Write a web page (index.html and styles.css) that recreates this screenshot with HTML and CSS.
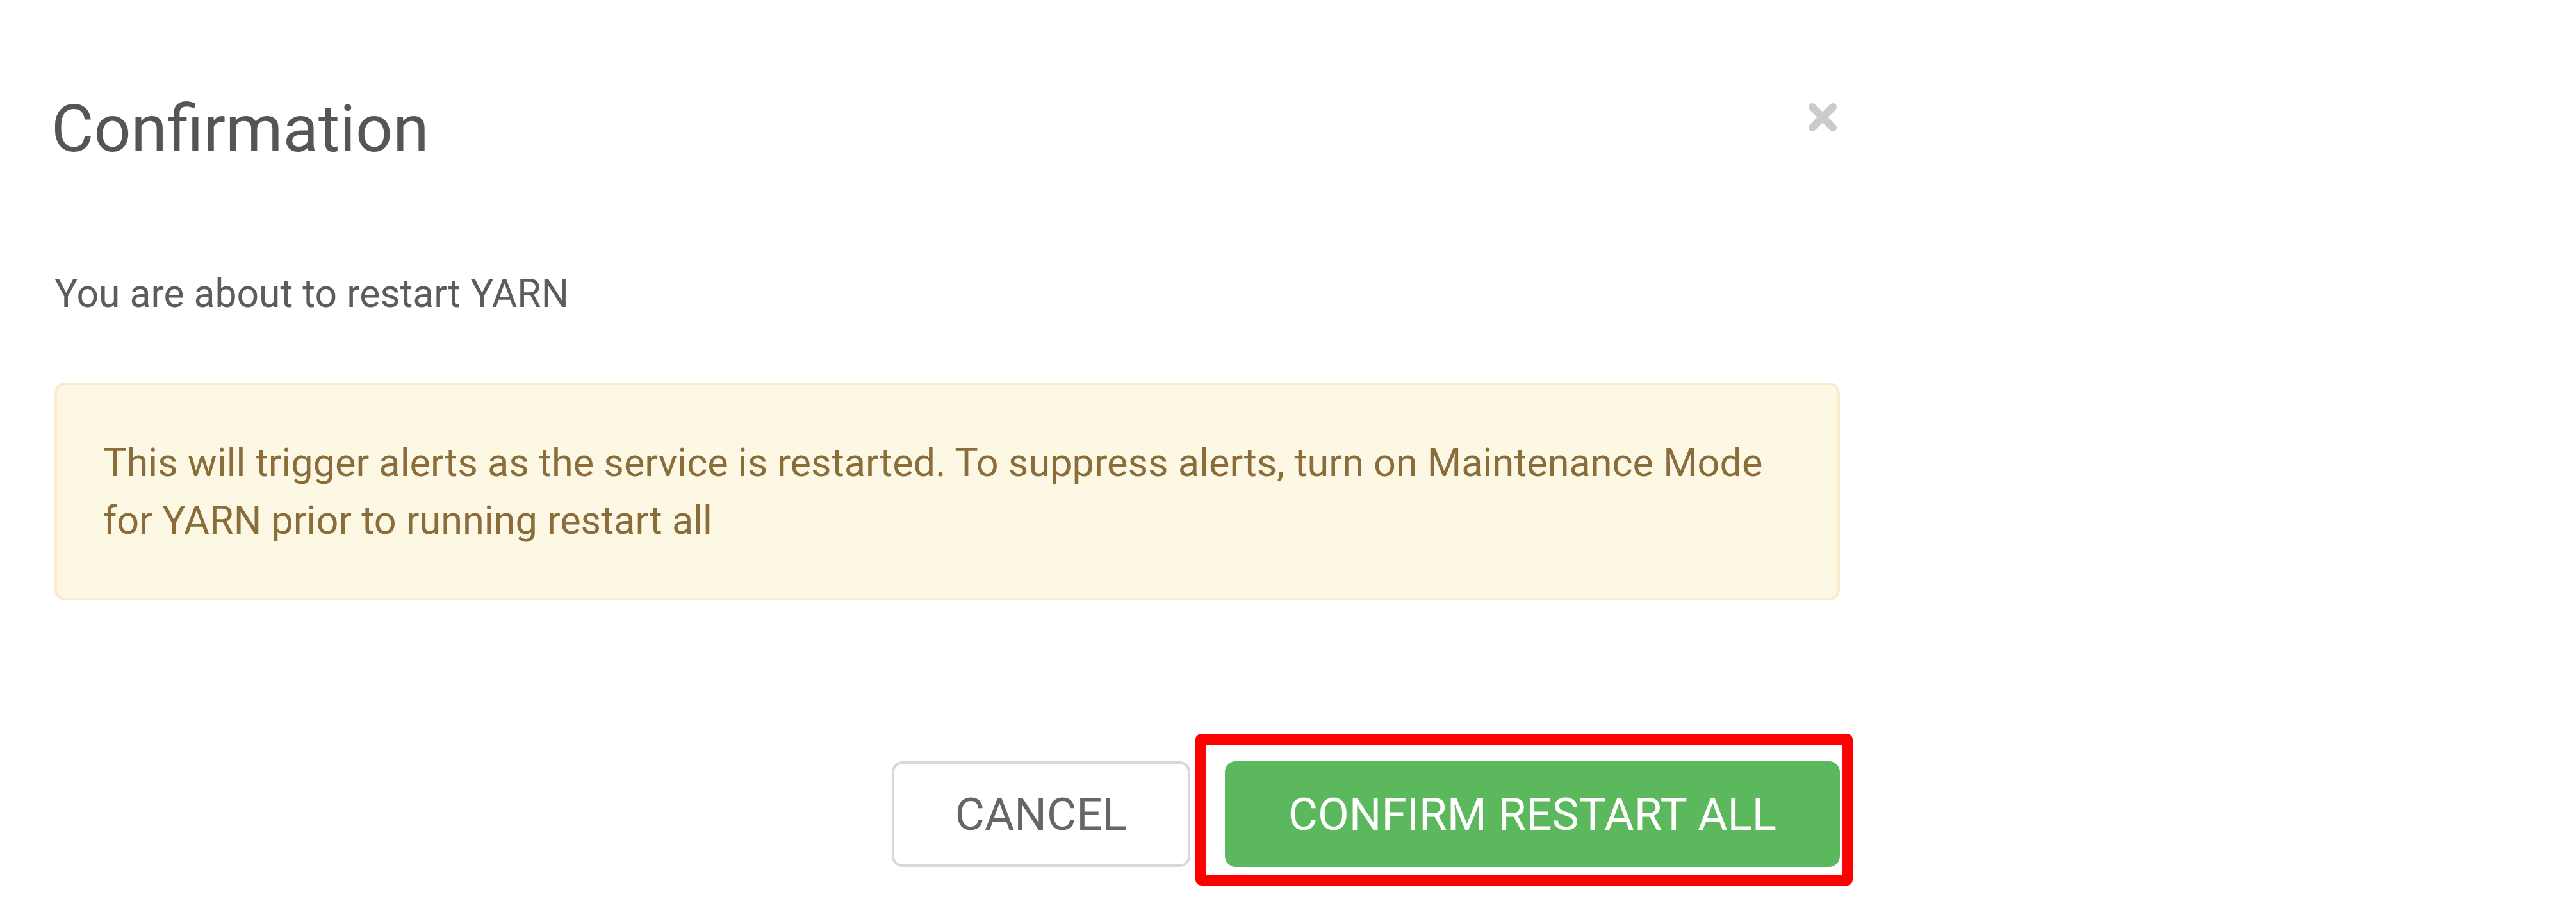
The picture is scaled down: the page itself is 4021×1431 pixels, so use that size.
FILE: index.html
```html
<!DOCTYPE html>
<html lang="en">
<head>
<meta charset="utf-8">
<title>Confirmation</title>
<link rel="stylesheet" href="styles.css">
</head>
<body>
<div class="modal">
  <div class="modal-header">
    <h4 class="modal-title">Confirmation</h4>
    <button class="close" aria-label="Close">
      <svg width="46" height="46" viewBox="0 0 46 46"><path d="M7 7 L39 39 M39 7 L7 39" stroke="#cbcbcb" stroke-width="12" stroke-linecap="round" fill="none"/></svg>
    </button>
  </div>
  <p class="modal-text">You are about to restart YARN</p>
  <div class="alert-warning">This will trigger alerts as the service is restarted. To suppress alerts, turn on Maintenance Mode for YARN prior to running restart all</div>
  <div class="modal-footer">
    <button class="btn btn-default">CANCEL</button>
    <div class="highlight-wrap">
      <button class="btn btn-success">CONFIRM RESTART ALL</button>
      <div class="highlight"></div>
    </div>
  </div>
</div>
</body>
</html>
```

FILE: styles.css
```css
html, body {
  margin: 0;
  padding: 0;
  background: #ffffff;
}
body {
  font-family: Roboto, "Liberation Sans", Arial, sans-serif;
  width: 4021px;
  height: 1431px;
  overflow: hidden;
}
.modal {
  display: flex;
  flex-direction: column;
  width: 2787px;
  margin-left: 85px;
  padding-top: 146px;
}
.modal-header {
  display: flex;
  justify-content: space-between;
  align-items: flex-start;
  height: 110px;
}
.modal-title {
  margin: 0 0 0 -5px;
  font-size: 102px;
  line-height: 110px;
  font-weight: 400;
  color: #555555;
}
.close {
  margin: 14px 4px 0 0;
  padding: 0;
  border: 0;
  background: transparent;
  width: 46px;
  height: 46px;
  display: block;
}
.close svg {
  display: block;
}
.modal-text {
  margin: 158px 0 0 0;
  font-size: 60.6px;
  line-height: 90px;
  color: #5c5c5c;
}
.alert-warning {
  margin-top: 93px;
  border: 4px solid #faebcc;
  border-radius: 17px;
  background: #fcf8e3;
  color: #8a6d3b;
  font-size: 61.2px;
  line-height: 90px;
  padding: 76px 72px 76px 72px;
}
.modal-footer {
  display: flex;
  justify-content: flex-end;
  align-items: center;
  gap: 54px;
  margin-top: 251px;
}
.btn {
  box-sizing: border-box;
  height: 165px;
  padding: 0 95px;
  border: 4px solid transparent;
  border-radius: 17px;
  font-family: Roboto, "Liberation Sans", Arial, sans-serif;
  font-size: 71px;
  font-weight: 400;
  display: flex;
  align-items: center;
  justify-content: center;
  white-space: nowrap;
}
.btn-default {
  background: #ffffff;
  border-color: #d6d8dc;
  color: #666666;
}
.btn-success {
  background: #5cb85c;
  border-color: #5cb85c;
  color: #ffffff;
}
.highlight-wrap {
  position: relative;
}
.highlight {
  position: absolute;
  left: -46px;
  top: -43px;
  right: -20px;
  bottom: -29px;
  border: 17px solid #ff0000;
  border-radius: 9px;
  pointer-events: none;
}
```
